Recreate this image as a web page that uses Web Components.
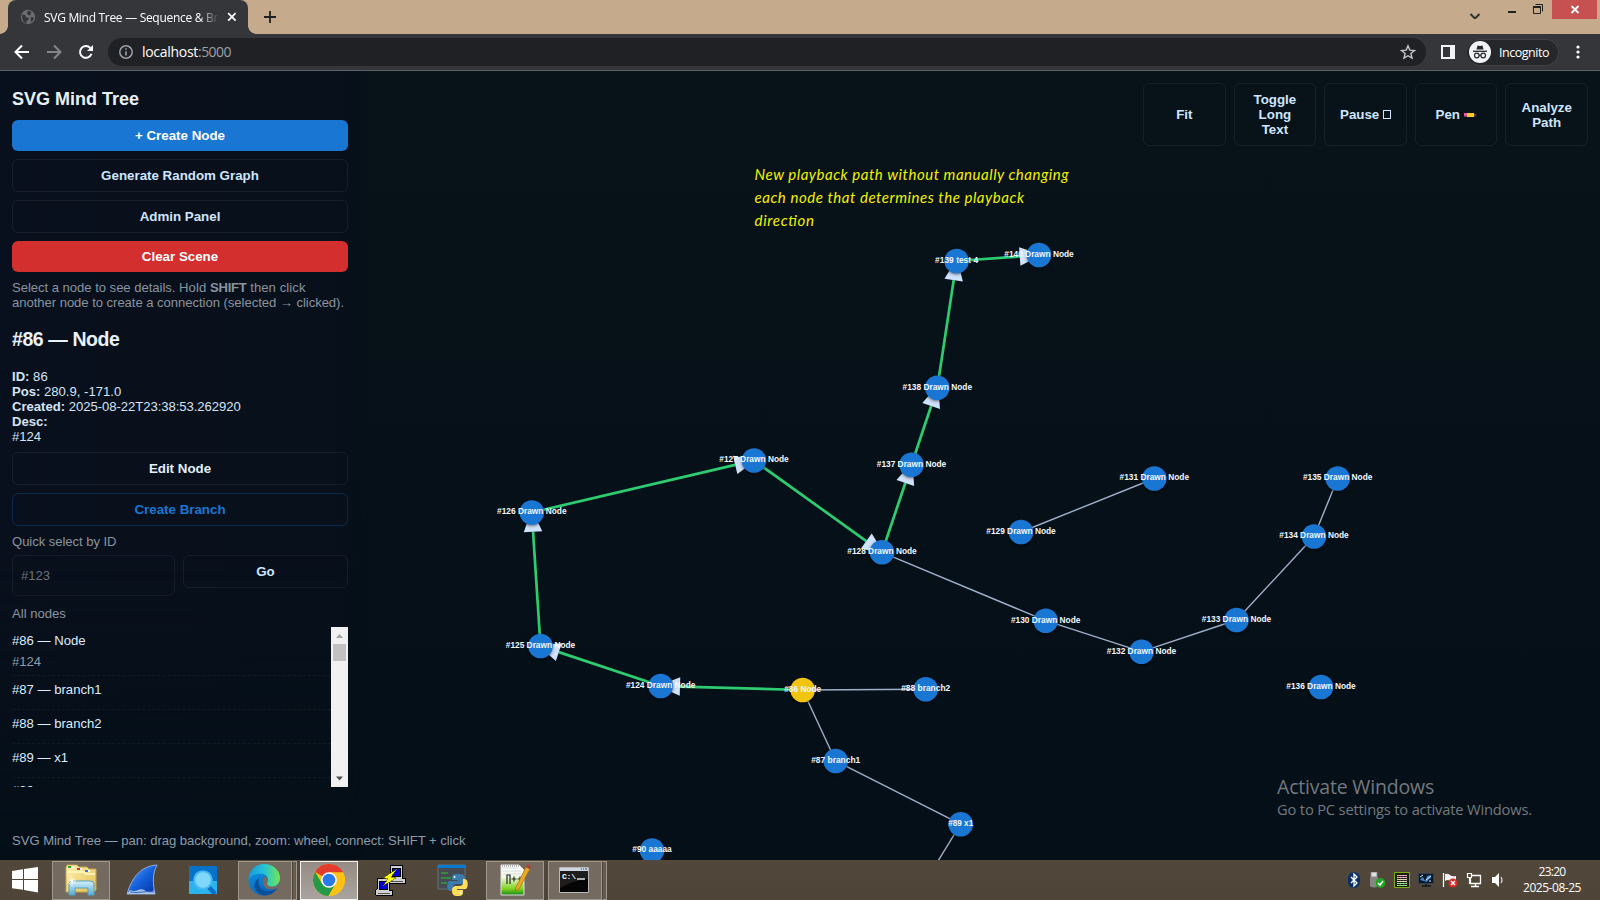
<!DOCTYPE html>
<html lang="en">
<head>
<meta charset="utf-8">
<title>SVG Mind Tree — Sequence &amp; Branch</title>
<style>
html,body{margin:0;height:100%;overflow:hidden;background:#061018}
body{font-family:"Liberation Sans",Arial,sans-serif}
</style>
</head>
<body>
<desk-top></desk-top>
<script>
const define=(name,html,init)=>customElements.define(name,class extends HTMLElement{
  constructor(){
    super();
    const t=document.createElement('template');
    t.innerHTML=html;
    this.attachShadow({mode:'open'}).append(t.content.cloneNode(true));
  }
  connectedCallback(){ if(init) init(this,this.shadowRoot); }
});

/* Text run spread to a given width */
define('fit-text',`<style>:host{display:inline-block;white-space:pre;width:max-content}span{display:inline-block}</style><span><slot></slot></span>`,(el,root)=>{
  const w=+el.getAttribute('w'), n=el.textContent.length;
  const s=root.querySelector('span');
  s.style.letterSpacing='0px';
  const real=s.getBoundingClientRect().width;
  if(w&&real) s.style.letterSpacing=((w-real)/n)+'px';
});

define('tab-strip',`<style>
:host{display:flex;height:34px;background:#c5ab8b;font-family:"Open Sans","Noto Sans",sans-serif;position:relative}
.tab{margin-left:8px;width:240px;height:34px;background:#35363a;border-radius:8px 8px 0 0;display:flex;align-items:center;position:relative;color:#fff;font-size:12px}
.tab:before,.tab:after{content:"";position:absolute;bottom:0;width:8px;height:8px}
.tab:before{left:-8px;background:radial-gradient(circle at 0 0,transparent 7.5px,#35363a 8px)}
.tab:after{right:-8px;background:radial-gradient(circle at 100% 0,transparent 7.5px,#35363a 8px)}
.g{margin-left:12px;flex:none}
.t{margin-left:8px;width:176px;overflow:hidden;white-space:nowrap;-webkit-mask:linear-gradient(90deg,#000 155px,transparent 175px);mask:linear-gradient(90deg,#000 155px,transparent 175px)}
.x{margin-left:7px;flex:none}
.plus{margin:11px 0 0 16px}
.ctl{margin-left:auto;display:flex;align-items:flex-start}
.close{width:45px;height:19px;background:#c75050;margin-right:3px}
svg{display:block}
</style>
<div class="tab">
<svg class="g" width="16" height="16" viewBox="0 0 16 16"><circle cx="8" cy="8" r="7.2" fill="#6b6d71"/><path d="M2 5.500l3 .6 1 2 3 1.200-.8 1.800-1.600 1-.2 2.400C3.800 13.600 1.800 11 2 5.500zM8 1.600l4 1.500-1.400 1 .5 1.900-2.500.2-1.700-1.600zM11 8l3 .6c-.3 2-1.400 3.600-2.600 4.500l-.7-2.200z" fill="#35363a"/></svg>
<div class="t"><fit-text w="174">SVG Mind Tree — Sequence &amp; Br</fit-text></div>
<svg class="x" width="10" height="10" viewBox="0 0 10 10"><path d="M1.200 1.200l7.400 7.400M8.600 1.200L1.200 8.600" stroke="#fff" stroke-width="1.700"/></svg>
</div>
<svg class="plus" width="12" height="12"><path d="M6 0v12M0 6h12" stroke="#202124" stroke-width="1.800"/></svg>
<div class="ctl">
<svg width="82" height="19" viewBox="0 0 82 19"><path d="M.5 14.500l4.500 4.500 4.500-4.500" fill="none" stroke="#333" stroke-width="2" transform="translate(0 -.5)"/><path d="M38 12h8" stroke="#222" stroke-width="2"/><path d="M63.500 6.500h7v7h-7z M65.500 4.500h7v7" fill="none" stroke="#222"/><path d="M63 7h8" stroke="#222" stroke-width="2"/></svg>
<svg class="close" viewBox="0 0 45 19"><path d="M19.500 6l7 7M26.500 6l-7 7" stroke="#fff" stroke-width="1.800"/></svg>
</div>`);

define('address-bar',`<style>
:host{display:flex;height:37px;box-sizing:border-box;border-bottom:1px solid #5f6368;background:#35363a;align-items:center;font-family:"Open Sans","Noto Sans",sans-serif;color:#fff}
svg{display:block;flex:none}
.nav{display:flex;gap:16px;margin-left:14px}
.box{margin-left:14px;width:1318px;height:28px;border-radius:14px;background:#202124;display:flex;align-items:center;font-size:14px;line-height:18px}
.box fit-text{margin-top:-1px}
.info{margin:0 9px 0 11px}
.p{color:#9aa0a6}
.star{margin-left:auto;margin-right:10px}
.panel{margin-left:15px}
.inc{margin-left:12px;width:92px;height:27px;box-sizing:border-box;border:1px solid #404145;border-left:0;border-radius:14px;background:#26272b;display:flex;align-items:center;font-size:12.500px}
.inc svg{margin:0 8px 0 2px}
.dots{margin-left:17px}
</style>
<div class="nav">
<svg width="16" height="16" viewBox="0 0 16 16"><path d="M15 8H2M8 1.500L1.500 8 8 14.500" fill="none" stroke="#fff" stroke-width="2"/></svg>
<svg width="16" height="16" viewBox="0 0 16 16"><path d="M1 8h13M8 1.500L14.500 8 8 14.500" fill="none" stroke="#85868a" stroke-width="2"/></svg>
<svg width="16" height="16" viewBox="0 0 16 16"><path d="M13.500 9.800A5.900 5.900 0 1 1 12.300 4" fill="none" stroke="#fff" stroke-width="2"/><path d="M15 1v6H9z" fill="#fff"/></svg>
</div>
<div class="box">
<svg class="info" width="14" height="14" viewBox="0 0 14 14"><circle cx="7" cy="7" r="6.200" fill="none" stroke="#9aa0a6" stroke-width="1.500"/><path d="M7 6.200v4.200M7 3.300v1.500" stroke="#9aa0a6" stroke-width="1.600"/></svg>
<fit-text w="56">localhost</fit-text><span class="p"><fit-text w="33">:5000</fit-text></span>
<svg class="star" width="16" height="16" viewBox="0 0 16 16"><path d="M8 1.800l1.800 4.300 4.700.4-3.600 3 1.100 4.600L8 11.700l-4 2.400 1.100-4.600-3.600-3 4.700-.4z" fill="none" stroke="#c4c7ca" stroke-width="1.400"/></svg>
</div>
<svg class="panel" width="14" height="14"><path fill-rule="evenodd" d="M0 0h14v14H0zM2 2v10h7V2z" fill="#f1f3f4"/></svg>
<div class="inc"><svg width="22" height="22" viewBox="0 0 22 22"><circle cx="11" cy="11" r="11" fill="#f1f3f4"/><path d="M7.500 8.500l1-4 2.500.6 2.500-.6 1 4z" fill="#26272b"/><path d="M4 10.300h14" stroke="#26272b" stroke-width="1.300"/><circle cx="7.800" cy="14.500" r="2.300" fill="none" stroke="#26272b" stroke-width="1.200"/><circle cx="14.200" cy="14.500" r="2.300" fill="none" stroke="#26272b" stroke-width="1.200"/><path d="M10 14.200h2" stroke="#26272b"/></svg><fit-text w="50">Incognito</fit-text></div>
<svg class="dots" width="4" height="14"><circle cx="2" cy="2" r="1.600" fill="#fff"/><circle cx="2" cy="7" r="1.600" fill="#fff"/><circle cx="2" cy="12" r="1.600" fill="#fff"/></svg>`);

define('ui-button',`<style>
:host{display:flex;box-sizing:border-box;align-items:center;justify-content:center;text-align:center;height:33px;border:1px solid rgba(255,255,255,.06);border-radius:6px;font:bold 13.333px/15px "Liberation Sans",Arial,sans-serif;color:#cfe6ff;padding:0 8px 1px}
:host([kind=primary]){height:31px;border:0;background:#1976d2;color:#fff}
:host([kind=danger]){height:31px;border:0;background:#d32f2f;color:#fff}
:host([kind=branch]){border-color:rgba(25,118,210,.25);color:#1976d2}
:host([kind=tool]){height:63px;padding:0 12px}
</style><span><slot></slot></span>`);

define('node-item',`<style>
:host{display:block;padding:6px 0;border-bottom:1px dashed rgba(255,255,255,.045);font-size:13.100px;line-height:15px;color:#dcecff}
div{margin-top:6px;color:#8f9baa}
</style><slot></slot><div><slot name="sub"></slot></div>`);

define('node-list',`<style>
:host{display:flex;height:160px;overflow:hidden}
.l{flex:1;height:160px;overflow:hidden}
.s{width:17px;background:#f1f1f1;display:flex;flex-direction:column;align-items:center}
.th{width:13px;height:17px;background:#c1c1c1}
svg{display:block}.d{margin-top:auto}
</style><div class="l"><slot></slot></div>
<div class="s"><svg width="17" height="17"><path d="M5 11h7L8.500 7z" fill="#a3a3a3"/></svg><div class="th"></div><svg class="d" width="17" height="17"><path d="M5 6.500h7l-3.500 4z" fill="#505050"/></svg></div>`);

define('side-panel',`<style>
:host{display:block;box-sizing:border-box;width:368px;height:789px;padding:18px 20px 0 12px;position:relative;color:#d5e4f7;font-size:13.100px;line-height:15px}
:host:before{content:""}
.bg{position:absolute;inset:0;background:linear-gradient(90deg,#09101d 0,#08101b 92%,#06111900 100%);-webkit-mask:linear-gradient(#000 60%,transparent);mask:linear-gradient(#000 60%,transparent)}
.c{position:relative}
h1{font-size:18px;line-height:21px;margin:0 0 10px;color:#e6f0f8}
.stack{display:grid;gap:8px}
.muted{color:#8a939f}
h2{font-size:19.500px;line-height:22px;margin:18px 0 19px;color:#e9f2fb}
.facts{margin-bottom:8px}
.find{display:flex;gap:8px;align-items:flex-start;margin:6px 0 10px}
.in{box-sizing:border-box;width:163px;height:41px;border:1px solid rgba(255,255,255,.05);border-radius:6px;padding:12px 8px;color:#6c7075}
.find ui-button{flex:1}
node-list{margin-top:6px}
</style>
<div class="bg"></div>
<div class="c">
<h1><fit-text w="127">SVG Mind Tree</fit-text></h1>
<div class="stack">
<ui-button kind="primary">+ Create Node</ui-button>
<ui-button>Generate Random Graph</ui-button>
<ui-button>Admin Panel</ui-button>
<ui-button kind="danger">Clear Scene</ui-button>
<div class="muted"><fit-text w="167">Select a node to see details. </fit-text><fit-text w="31">Hold </fit-text><b><fit-text w="36.500">SHIFT</fit-text></b><fit-text w="59"> then click</fit-text><br><fit-text w="332">another node to create a connection (selected → clicked).</fit-text></div>
</div>
<h2><fit-text w="107.500">#86 — Node</fit-text></h2>
<div class="facts"><b>ID:</b> 86<br><b>Pos:</b> 280.9, -171.0<br><b>Created:</b> <fit-text w="172">2025-08-22T23:38:53.262920</fit-text><br><b>Desc:</b><br>#124</div>
<div class="stack"><ui-button><span style="color:#e3effc">Edit Node</span></ui-button><ui-button kind="branch">Create Branch</ui-button><div class="muted"><fit-text w="104.500">Quick select by ID</fit-text></div></div>
<div class="find"><div class="in">#123</div><ui-button>Go</ui-button></div>
<div class="muted">All nodes</div>
<node-list>
<node-item>#86 — Node<span slot="sub">#124</span></node-item>
<node-item>#87 — branch1</node-item>
<node-item>#88 — branch2</node-item>
<node-item>#89 — x1</node-item>
<node-item style="padding-top:5px">#90 — aaaaa</node-item>
</node-list>
</div>`);

define('mind-graph',`<style>
:host{display:block;position:absolute;inset:0}
svg{display:block}
.label{font:bold 8.800px "Liberation Sans",Arial,sans-serif;fill:#f2f7ff;text-anchor:middle}
.note{font:italic 15px Lato,cursive;fill:#f5f100}
.node{filter:drop-shadow(0 1.500px 1.500px rgba(0,0,0,.55))}
</style><svg width="1600" height="789" viewBox="0 71 1600 789"></svg>`,(el,root)=>{
  const N={86:[802.7,690,'Node',37],88:[925.7,689.3,'branch2',49],124:[660.7,686],87:[835.7,761,'branch1',49],89:[960.7,824.2,'x1',25],90:[652,850.5,'aaaaa',39.500],125:[540.5,646],126:[531.8,512.5],127:[754,460.5],128:[882,552.3],137:[911.5,464.700],138:[937.3,387.700],139:[956.600,261,'test 4',43],140:[1039,255],129:[1021,532],131:[1154.300,478.500],135:[1337.700,478.500],134:[1314,536.500],133:[1236.500,620],132:[1141.500,651.700],130:[1045.700,620.700],136:[1321,687]};
  const plain=[[86,88],[86,87],[87,89],[128,130],[130,132],[132,133],[133,134],[134,135],[129,131]];
  const path=[[86,124],[124,125],[125,126],[126,127],[127,128],[128,137],[137,138],[138,139],[139,140]];
  let s='';
  for(const [a,b] of plain) s+=`<path d="M${N[a][0]} ${N[a][1]}L${N[b][0]} ${N[b][1]}" stroke="#9fb0c8" stroke-width="1.400"/>`;
  s+=`<path d="M960.700 824L938 861" stroke="#9fb0c8" stroke-width="1.400"/>`;
  for(const [a,b] of path){
    const [x1,y1]=N[a],[x2,y2]=N[b],l=Math.hypot(x2-x1,y2-y1),ux=(x2-x1)/l,uy=(y2-y1)/l;
    const bx=x2-ux*19.300,by=y2-uy*19.300;
    s+=`<path d="M${x1} ${y1}L${bx} ${by}" stroke="#2ecc71" stroke-width="2.700"/><path d="M${bx-uy*9.300} ${by+ux*9.300}L${x2+ux*3} ${y2+uy*3}L${bx+uy*9.300} ${by-ux*9.300}z" fill="#cfe2fb"/>`;
  }
  for(const id in N){
    const [x,y,n='Drawn Node',w=69.500]=N[id];
    s+=`<circle class="node" cx="${x}" cy="${y}" r="12.300" fill="${id==86?'#f1c40f':'#1976d2'}"/><text class="label" x="${x}" y="${y+1.900}" textLength="${w}" lengthAdjust="spacingAndGlyphs">#${id} ${n}</text>`;
  }
  s+=`<text class="note" x="754.500" y="179.500" textLength="314">New playback path without manually changing</text><text class="note" x="754.500" y="202.500" textLength="269.500">each node that determines the playback</text><text class="note" x="754.500" y="225.500" textLength="59.500">direction</text>`;
  root.querySelector('svg').innerHTML=s;
});

define('tool-row',`<style>
:host{position:absolute;top:12px;right:12px;width:445px;display:grid;grid-template-columns:repeat(5,1fr);gap:8px}
i{display:inline-block;width:6px;height:7px;border:1px solid #cfe6ff}
svg{vertical-align:1px}
ui-button{white-space:nowrap}
</style>
<ui-button kind="tool">Fit</ui-button><ui-button kind="tool">Toggle<br>Long<br>Text</ui-button><ui-button kind="tool">Pause <i></i></ui-button><ui-button kind="tool">Pen <svg width="13" height="6"><path d="M0 1h3v3.500H0z" fill="#e754a0"/><path d="M3 1h7v4H3z" fill="#fccb2f"/><path d="M10 1l3 2-3 2z" fill="#5b4a36"/></svg></ui-button><ui-button kind="tool">Analyze<br>Path</ui-button>`);

define('mind-app',`<style>
:host{display:block;position:relative;height:789px;overflow:hidden;background:linear-gradient(180deg,#071219,#040f18)}
.foot{position:absolute;left:12px;bottom:12px;font-size:13.100px;line-height:15px;color:#8f9baa}
.act{position:absolute;left:1277px;top:702px;color:#74797e;font-family:"Open Sans","Noto Sans",sans-serif;font-size:19.500px;line-height:28px}
.act div+div{font-size:14.700px;line-height:18px;margin-top:-1px}
</style>
<side-panel></side-panel><mind-graph></mind-graph><tool-row></tool-row>
<div class="foot"><fit-text w="453.500">SVG Mind Tree — pan: drag background, zoom: wheel, connect: SHIFT + click</fit-text></div>
<div class="act"><div><fit-text w="157">Activate Windows</fit-text></div><div><fit-text w="255">Go to PC settings to activate Windows.</fit-text></div></div>`);

define('task-button',`<style>
:host{display:flex;box-sizing:border-box;width:58px;height:39px;align-items:center;justify-content:center;flex:none}
:host([open]){background:#746a60;border:1px solid #a0978e}
:host([active]){background:linear-gradient(#958c85,#aaa39d);border:1px solid #f4f2f0}
:host([stack]){width:54px;margin-right:5px;position:relative;padding-right:2px}
:host([stack]):after{content:"";position:absolute;left:53px;top:-1px;width:3px;height:37px;border:1px solid #a0978e;border-left-color:#4f4538;background:#655b50}
:host([stack])::after{content:none}
.edge{display:none}
:host([stack]) .edge{display:block;position:absolute;left:53px;top:-1px;width:3px;height:37px;border:1px solid #a0978e;border-left-color:#4f4538;background:#655b50}
</style><slot></slot><span class="edge"></span>`);

define('task-bar',`<style>
:host{display:flex;height:40px;background:linear-gradient(#51473a,#4e4437);color:#fff;align-items:center;font-family:"Open Sans","Noto Sans",sans-serif;font-size:12px;line-height:16px}
svg{display:block;flex:none}
.win{margin:0 14px 0 12px}
.tray{margin-left:auto;display:flex;align-items:center;gap:8px}
.clock{text-align:center;width:60px;margin:0 18px 0 6px}
</style>
<svg class="win" width="26" height="26" viewBox="0 0 26 26"><path d="M0 4l11-1.700V12H0zM12 2.100L26 0v12H12zM0 13h11v9.700L0 21.200zM12 13h14v12.500l-14-2.400z" fill="#fff"/></svg>
<task-button open><svg width="34" height="32" viewBox="0 0 34 32"><defs><linearGradient id="f" x2="1" y2="1"><stop stop-color="#fff3b5"/><stop offset="1" stop-color="#e3bd4b"/></linearGradient><linearGradient id="g" x2="0" y2="1"><stop stop-color="#d4eefa"/><stop offset="1" stop-color="#56aed6"/></linearGradient></defs><path d="M2 4l1-3h10l2 2h8l2 2h7v21l-2 2H2z" fill="url(#f)" stroke="#c7a64a"/><path d="M5 2h5v2H5zM13 4h5v2h-5zM21 6h5v2h-5z" fill="#fff"/><path d="M4 2h3v2H4z" fill="#20b020"/><path d="M13 4h3v2h-3z" fill="#d33"/><path d="M21 6h3v2h-3z" fill="#2a7be0"/><path d="M3 8h17l2 2h9" fill="none" stroke="#fff3b8" stroke-width="2"/><path fill-rule="evenodd" d="M5 31V20q0-3 4-3h17q4 0 4 3v11h-6v-7H11v7z" fill="url(#g)" stroke="#55a0c2"/><path d="M8 12v10M4 17h8M5 14l6 6M11 14l-6 6" stroke="#fff" stroke-width=".8"/></svg></task-button>
<task-button style="width:64px"><svg width="32" height="32" viewBox="0 0 32 32"><defs><linearGradient id="w" x2="1" y2="1"><stop stop-color="#69aaff"/><stop offset=".5" stop-color="#1560dc"/><stop offset="1" stop-color="#042f9e"/></linearGradient></defs><path d="M1 30C6 13 15 2 31 1c-5 9-4 19-2 29z" fill="url(#w)" stroke="#92acd0"/><path d="M1 30l3-4q4 2 8 0t8 1 8-1l1 4z" fill="#a8c5ee"/><path d="M4 28q6 1 12 0t12 0" stroke="#3768ba" fill="none"/></svg></task-button>
<task-button style="width:58px"><svg width="28" height="28" viewBox="0 0 28 28"><path d="M0 0h28v28H0z" fill="#0871c8"/><path d="M0 15h28v13H0z" fill="#2cb3ed"/><path d="M18 19l8 9" stroke="#0871c8" stroke-width="4.500"/><circle cx="14" cy="14" r="8.800" fill="#7fd7fa" stroke="#45b9f1" stroke-width="2"/></svg></task-button>
<task-button open stack style="margin-left:6px;margin-right:8px"><svg width="32" height="32" viewBox="0 0 32 32"><defs><linearGradient id="e" x2="1"><stop stop-color="#159be0"/><stop offset=".5" stop-color="#27c2d5"/><stop offset="1" stop-color="#70e850"/></linearGradient><linearGradient id="b" x2=".4" y2="1"><stop stop-color="#12a0e4"/><stop offset="1" stop-color="#0862bd"/></linearGradient></defs><circle cx="16" cy="16" r="15.500" fill="url(#b)"/><path d="M.5 15C1 6 8 0 16 0c10 0 16 7 16 14 0 6-4 9-9 9-4 0-6-2-4-4 2-3 1-8-4-9-6-1-12 1-14.500 5z" fill="url(#e)"/><path d="M11 14c-3 8 4 15 12 13 2 0 4-1 6-3-4 8-13 9-18 5-7-5-5-12 0-15z" fill="#0b4f99"/><path d="M17 12.500c3 1 3.500 4 2 6.500-1 3 5 5 10 2.500l3-3v6l-3-.5c-5 3-13 2-14-5q-1-4 2-6.500z" fill="#746a60"/></svg></task-button>
<task-button active><svg width="32" height="32" viewBox="0 0 32 32"><circle cx="16" cy="16" r="16" fill="#fbc116"/><path d="M16 16L2.140 8A16 16 0 0 1 29.860 8z" fill="#e33b2e"/><path d="M16 8h13.860" stroke="#e33b2e"/><path d="M2.140 8A16 16 0 0 0 15.500 32L22.500 20 16 16 9.200 20z" fill="#249a48"/><path d="M16 8.200h13.860A16 16 0 0 1 15.500 32L22.500 20z" fill="#fbc116"/><circle cx="16" cy="16" r="7.800" fill="#fff"/><circle cx="16" cy="16" r="6.300" fill="#2979ed"/></svg></task-button>
<task-button style="margin-left:3px"><svg width="32" height="32" viewBox="0 0 32 32" shape-rendering="crispEdges"><g><path d="M16 1h12v13h3v5H15l-1-4 2-2z" fill="#d0d0d0" stroke="#000"/><path d="M18 4h8v8h-8z" fill="#0000d8" stroke="#000"/><path d="M17 17h12" stroke="#555"/></g><g transform="translate(-13 13)"><path d="M16 1h12v12h3v5H15l-1-4 2-2z" fill="#d0d0d0" stroke="#000"/><path d="M18 4h8v8h-8z" fill="#0000d8" stroke="#000"/><path d="M17 16h12" stroke="#555"/></g><path d="M23 5L9 14l5 1-5 7 13-8-5-1z" fill="#ff0" stroke="#554c00" stroke-width=".6"/></svg></task-button>
<task-button style="width:67px"><svg width="32" height="32" viewBox="0 0 32 32"><path d="M1 1h27v24H1z" fill="#454b50" stroke="#667079"/><path d="M1 1h28v3H1z" fill="#087bd1"/><path d="M4 9h7M4 14h10M4 19h6" stroke="#349d3a" stroke-width="1.500"/><path d="M20 10c-5 0-5 2-5 5v1h6v1h-9c-2 1-3 9 1 10h3v-4q0-3 4-3h5q3-1 3-4c0-5-1-6-8-6z" fill="#3b7cae"/><path d="M21 32c5 0 5-2 5-5v-1h-6v-1h9c2-1 3-9-1-10h-2v4q0 3-4 3h-4q-3 1-3 4c0 4 1 6 6 6z" fill="#ffdd58"/><circle cx="17.500" cy="13" r="1" fill="#fff"/><circle cx="23.500" cy="29" r="1" fill="#fff"/></svg></task-button>
<task-button open><svg width="32" height="32" viewBox="0 0 32 32"><defs><linearGradient id="n" x2="0" y2="1"><stop stop-color="#fff"/><stop offset=".4" stop-color="#f3f9e6"/><stop offset=".8" stop-color="#7ed21c"/><stop offset="1" stop-color="#168b16"/></linearGradient></defs><path d="M2 1h18l5 5v25H2z" fill="url(#n)" stroke="#ddd"/><path d="M4 4h15M4 7h18M4 10h18" stroke="#d7dce2"/><path d="M3 2h18" stroke="#777" stroke-dasharray="1 1"/><path d="M8 20v-9h3v9M12.500 15h5M15 12.500v5M18.500 15h5M21 12.500v5" stroke="#272727" stroke-width="1.200" fill="none"/><path d="M27 3l4 2-11 20-4 2 1-4z" fill="#e9aa24" stroke="#a36e13" stroke-width=".7"/><path d="M27 3l2-3 3 2-1 3z" fill="#a94145"/></svg></task-button>
<task-button open stack style="margin-left:4px"><svg width="30" height="26" viewBox="0 0 30 26"><path d="M.5.500h29v25H.5z" fill="#050505" stroke="#b5b8bd"/><path d="M1 1h28v3H1z" fill="#cfd6df"/><path d="M22 2h1M24 2h1M26 2h2" stroke="#38516f"/><path d="M1 4h28v8Q15 13 1 21z" fill="#1d1d1d"/><text x="3" y="12" font-family="Liberation Mono" font-size="8" font-weight="bold" fill="#fff" textLength="14">C:\\</text><path d="M18 12h8" stroke="#fff" stroke-width="1.300"/></svg></task-button>
<div class="tray">
<svg width="12" height="16"><rect width="12" height="16" rx="6" fill="#0b3168"/><path d="M3 5l6 6-3 3V2l3 3-6 6" fill="none" stroke="#fff" stroke-width="1.300"/></svg>
<svg style="margin-left:2px" width="16" height="16"><path d="M1 0h6v5H1z" fill="#e1e1e1" stroke="#888"/><path d="M0 5h8v9q-4 3-8 0z" fill="#858585"/><circle cx="10.500" cy="11" r="4.900" fill="#20a421"/><path d="M8 11l2 2 3-4" fill="none" stroke="#fff" stroke-width="1.500"/></svg>
<svg width="16" height="16"><path d="M.5.500h15v15H.5z" fill="#182015" stroke="#7eac10"/><path d="M3 3.500h10M3 5.500h10" stroke="#f0a0b8"/><path d="M3 7.500h10M3 9.500h10" stroke="#e0cfa8"/><path d="M3 11.500h10M3 13.500h10" stroke="#8fdc80"/><path d="M3.500 3v11M6.500 3v11M9.500 3v11M12.500 3v11" stroke="#fff" stroke-opacity=".15"/></svg>
<svg width="16" height="16"><path d="M.5 1.500h15v10H.5z" fill="#09182b" stroke="#33404c"/><path d="M2 8q3-5 4-1t3-3l4-1v3q-3 1-4 4z" fill="#3f83c4"/><path d="M2 5l3-2M8 8l5-4M12 8v2" stroke="#dceeff"/><path d="M4 14h9M8 12v3" stroke="#202020" stroke-width="2"/></svg>
<svg width="16" height="16"><path d="M1.500 1v14" stroke="#fff" stroke-width="1.300"/><path d="M3 2q3-1 5 1t6 1v7q-4 0-6-2t-5 0z" fill="#f3f3f3"/><circle cx="11" cy="11" r="4.500" fill="#dc2827"/><path d="M9 9l4 4M13 9l-4 4" stroke="#fff" stroke-width="1.400"/></svg>
<svg width="16" height="16"><path d="M6 3.500h8.500v8H4.500V6M9.500 12v2M5 14.500h8" fill="none" stroke="#fff" stroke-width="1.300"/><path d="M1.500 1.500h4v4h-4zM3.500 6v6" fill="none" stroke="#fff" stroke-width="1.200"/></svg>
<svg width="18" height="16"><path d="M2 5h3l4-4v14l-4-4H2z" fill="#fff"/><path d="M11 5q2 3 0 6" fill="none" stroke="#d4d0cc" stroke-width="1.300"/></svg>
<div class="clock"><fit-text w="27">23:20</fit-text><br><fit-text w="58">2025-08-25</fit-text></div>
</div>`);

define('desk-top',`<style>:host{display:grid;grid-template-rows:34px 37px 789px 40px;width:1600px;height:900px}</style>
<tab-strip></tab-strip><address-bar></address-bar><mind-app></mind-app><task-bar></task-bar>`);
</script>
</body>
</html>
